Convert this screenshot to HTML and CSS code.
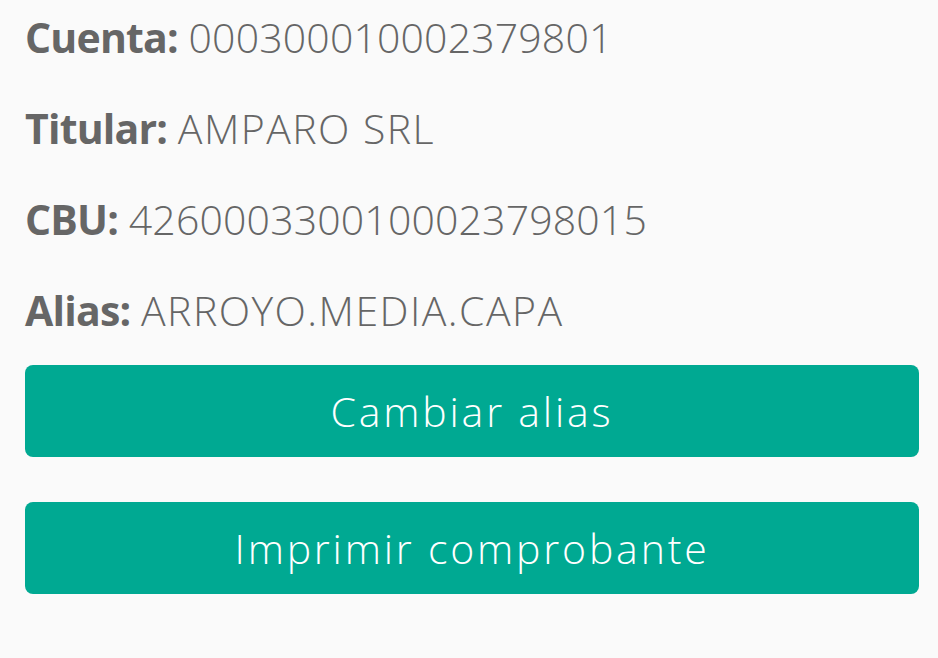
FILE: index.html
```html
<!DOCTYPE html>
<html lang="es">
<head>
<meta charset="utf-8">
<link rel="stylesheet" href="styles.css">
</head>
<body>
<main class="panel">
  <p class="row"><span class="label">Cuenta:</span> <span class="num">000300010002379801</span></p>
  <p class="row"><span class="label">Titular:</span> <span class="caps">AMPARO SRL</span></p>
  <p class="row"><span class="label">CBU:</span> <span class="num">4260003300100023798015</span></p>
  <p class="row"><span class="label">Alias:</span> <span class="caps">ARROYO.MEDIA.CAPA</span></p>
  <div class="actions">
    <button class="btn">Cambiar alias</button>
    <button class="btn">Imprimir comprobante</button>
  </div>
</main>
</body>
</html>
```
FILE: styles.css
```css
html, body {
  margin: 0;
  padding: 0;
  background: #fafafa;
}
body {
  width: 938px;
  height: 658px;
  overflow: hidden;
  font-family: "Open Sans", "Liberation Sans", sans-serif;
}
.panel {
  padding: 12px 19px 0 25px;
  display: flex;
  flex-direction: column;
  gap: 41px;
}
.row {
  margin: 0;
  font-size: 41px;
  line-height: 50px;
  color: #666666;
  font-weight: 300;
  white-space: nowrap;
}
.label {
  font-weight: 700;
  letter-spacing: -0.8px;
}
.num {
  letter-spacing: 0.15px;
}
.caps {
  letter-spacing: 1.45px;
}
.actions {
  display: flex;
  flex-direction: column;
  gap: 45px;
  margin-top: -11px;
}
.btn {
  height: 92px;
  border: none;
  border-radius: 8px;
  background: #00a992;
  color: #ffffff;
  font-family: "Open Sans", "Liberation Sans", sans-serif;
  font-size: 41px;
  font-weight: 300;
  letter-spacing: 2.8px;
  padding: 0;
  cursor: pointer;
}
```
